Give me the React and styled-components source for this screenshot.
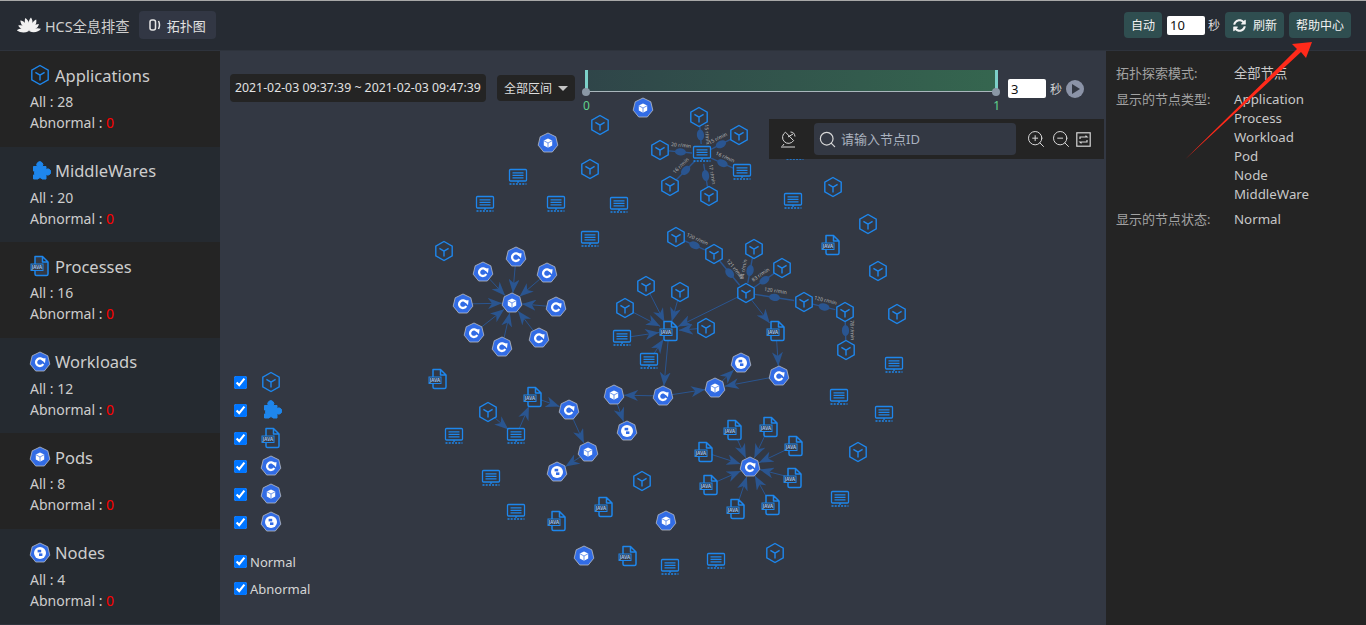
import React from 'react';
import styled, { createGlobalStyle } from 'styled-components';
import { FaSyncAlt } from 'react-icons/fa';
import { Search, ZoomIn, ZoomOut } from 'lucide-react';

const BLUE = '#1e86ec';
const K8S = '#326ce5';
const EDGE = '#2a5590';

const GlobalStyle = createGlobalStyle`
  html, body { margin: 0; padding: 0; height: 100%; overflow: hidden; background: #333843; }
  * { box-sizing: border-box; }
  body { font-family: 'Noto Sans', 'Noto Sans CJK SC', sans-serif; font-size: 13px; }
`;

const Page = styled.div`
  position: relative;
  display: flex;
  flex-direction: column;
  width: 1366px;
  height: 625px;
  overflow: hidden;
`;

const Header = styled.header`
  display: flex;
  align-items: center;
  justify-content: space-between;
  height: 51px;
  flex: none;
  padding: 0 15px 1px 17px;
  background: #262b33;
  border-top: 1px solid #a8a8a8;
  border-bottom: 1px solid #2e333c;
`;

const Brand = styled.div`
  display: flex;
  align-items: center;
  gap: 9px;
`;

const Title = styled.span`
  margin-left: -5px;
  font-size: 14.3px;
  color: #cfcfcf;
`;

const Tab = styled.div`
  display: flex;
  align-items: center;
  gap: 6px;
  height: 28px;
  padding: 0 10px;
  border-radius: 4px;
  background: #323744;
  color: #e2e2e2;
  font-size: 13px;
`;

const HeaderTools = styled.div`
  display: flex;
  align-items: center;
  gap: 5px;
  color: #e6e6e6;
`;

const ToolButton = styled.button`
  display: flex;
  align-items: center;
  gap: 7px;
  height: 26px;
  padding: 0 7px;
  border: 0;
  border-radius: 4px;
  background: #2f4e50;
  color: #f2f2f2;
  font: inherit;
  font-size: 12px;
`;

const RefreshIcon = styled(FaSyncAlt)`
  width: 13px;
  height: 13px;
  margin-left: 1px;
`;

const NumberBox = styled.input`
  width: 38px;
  height: 19px;
  padding: 0 3px;
  border: 0;
  border-radius: 2px;
  background: #fff;
  color: #111;
  font-family: inherit;
  font-size: 13px;
`;

const Unit = styled.span`
  margin-left: -2px;
  font-size: 12px;
  color: #dcdcdc;
`;

const Body = styled.div`
  display: flex;
  flex: 1;
  min-height: 0;
`;

const Sidebar = styled.aside`
  display: flex;
  flex-direction: column;
  width: 220px;
  flex: none;
  padding-bottom: 0.5px;
  background: #2e333c;
`;

const Summary = styled.section`
  flex: 1;
  padding: 12px 0 0 30px;
  background: ${(p) => (p.$alt ? '#252a30' : '#242424')};
  color: #cdcdcd;
  font-size: 14px;
  line-height: 21px;
`;

const SummaryTitle = styled.div`
  display: flex;
  align-items: center;
  gap: 4px;
  height: 24px;
  margin-bottom: 4px;
  margin-left: -1px;
  font-size: 16.5px;
`;

const Zero = styled.span`
  color: #f00;
`;

const Main = styled.main`
  position: relative;
  display: flex;
  flex-direction: column;
  flex: 1;
  min-width: 0;
  background: #333843;
`;

const Graph = styled.svg`
  position: absolute;
  left: 0;
  top: 0;
  width: 886px;
  height: 574px;
`;

const TimeRow = styled.div`
  position: relative;
  display: flex;
  align-items: flex-start;
  padding: 19px 0 0 10px;
`;

const DateChip = styled.div`
  width: 256px;
  height: 28px;
  margin-top: 4px;
  padding: 0 5px;
  border-radius: 4px;
  background: #242424;
  color: #e2e2e2;
  font-size: 12.3px;
  line-height: 28px;
  white-space: nowrap;
`;

const RangeSelect = styled.div`
  display: flex;
  align-items: center;
  justify-content: space-between;
  width: 78px;
  height: 26px;
  margin: 5px 0 0 11px;
  padding: 0 7px;
  border-radius: 4px;
  background: #242424;
  color: #dedede;
  font-size: 12px;
`;

const Caret = styled.i`
  width: 0;
  height: 0;
  border-left: 5px solid transparent;
  border-right: 5px solid transparent;
  border-top: 5px solid #c4c4c4;
`;

const Slider = styled.div`
  position: relative;
  width: 413px;
  height: 22px;
  margin-left: 10px;
  background: linear-gradient(90deg, #2f4549, #35664f);
  border-bottom: 1px solid #a9b6bc;
`;

const Handle = styled.i`
  position: absolute;
  top: 0;
  ${(p) => (p.$end ? 'right: 0' : 'left: 0')};
  width: 3px;
  height: 22px;
  background: #7dd0c9;
  &::after {
    content: '';
    position: absolute;
    left: -3px;
    bottom: -4px;
    width: 8px;
    height: 8px;
    border-radius: 50%;
    background: #8a97a5;
  }
`;

const Tick = styled.span`
  position: absolute;
  top: 28px;
  ${(p) => (p.$end ? 'right: -2px' : 'left: -2px')};
  color: #5fd38d;
  font-size: 12px;
  line-height: 16px;
`;

const PlayGroup = styled.div`
  display: flex;
  align-items: center;
  gap: 4px;
  height: 19px;
  margin: 9px 0 0 10px;
  color: #d4d4d4;
  font-size: 12px;
`;

const PlayButton = styled.span`
  display: flex;
  align-items: center;
  justify-content: center;
  width: 18px;
  height: 18px;
  border-radius: 50%;
  background: #8b93a7;
  &::before {
    content: '';
    margin-left: 2px;
    border-left: 8px solid #333843;
    border-top: 5px solid transparent;
    border-bottom: 5px solid transparent;
  }
`;

const GraphTools = styled.div`
  position: absolute;
  top: 68px;
  left: 549px;
  display: flex;
  align-items: center;
  width: 335px;
  height: 40px;
  padding: 0 12px 0 11px;
  background: #242424;
  color: #d8d8d8;
`;

const SearchBox = styled.label`
  display: flex;
  align-items: center;
  gap: 2px;
  width: 202px;
  height: 32px;
  margin: 0 10px 0 18px;
  padding: 0 4px;
  border-radius: 4px;
  background: #333843;
  color: #d8d8d8;
`;

const SearchInput = styled.input`
  flex: 1;
  min-width: 0;
  border: 0;
  outline: 0;
  background: none;
  color: #ddd;
  font-family: inherit;
  font-size: 13px;
  &::placeholder { color: #aab2bf; opacity: 1; }
`;

const ZoomGroup = styled.div`
  display: flex;
  align-items: center;
  gap: 5px;
`;

const Legend = styled.div`
  position: relative;
  display: flex;
  flex-direction: column;
  margin-top: auto;
  padding: 0 0 23px 14px;
`;

const LegendRow = styled.label`
  display: flex;
  align-items: center;
  gap: ${(p) => (p.$text ? '3px' : '13px')};
  height: ${(p) => (p.$text ? '27px' : '28px')};
  margin-top: ${(p) => (p.$first ? '12px' : '0')};
  color: #d6d6d6;
  font-size: 13px;
`;

const Check = styled.input.attrs({ type: 'checkbox', readOnly: true })`
  width: 13px;
  height: 13px;
  margin: 0;
`;

const InfoPanel = styled.aside`
  display: grid;
  grid-template-columns: 118px 1fr;
  align-content: start;
  row-gap: 6.5px;
  width: 260px;
  flex: none;
  padding: 13px 0 0 10px;
  background: #242424;
  font-size: 13px;
  line-height: 19px;
`;

const InfoLabel = styled.div`
  color: #a2a2a2;
`;

const InfoValue = styled.div`
  color: #c8c8c8;
  font-size: 13.3px;
`;

const Pointer = styled.svg`
  position: absolute;
  left: 0;
  top: 0;
  width: 1366px;
  height: 625px;
  pointer-events: none;
`;

const HEPT = '0,-10 7.8,-6.2 9.8,2.2 4.3,9 -4.3,9 -9.8,2.2 -7.8,-6.2';

// one picture per node type, drawn round 0,0
const Glyph = ({ type }) => {
  if (type === 'c') {
    return (
      <g fill="none" stroke={BLUE} strokeWidth="1.4">
        <polygon points="0,-9.5 8.2,-4.8 8.2,4.8 0,9.5 -8.2,4.8 -8.2,-4.8" />
        <path d="M-4.6,-2.6 L0,0.2 L4.6,-2.6 M0,0.2 L0,5.6" />
      </g>
    );
  }
  if (type === 'm') {
    return (
      <path
        d="M-6.5,-4.5 H-2.6 A3,3 0 1 1 2.2,-4.5 H6 V-1.4 A3,3 0 1 1 6,3.4 V8 H2 A2.2,2.2 0 0 0 -2,8 H-6.5 V4 A2.2,2.2 0 0 0 -6.5,0 Z"
        fill={BLUE}
        stroke={BLUE}
        strokeWidth="1"
        strokeLinejoin="round"
      />
    );
  }
  if (type === 's') {
    return (
      <g fill="none" stroke={BLUE} strokeWidth="1.3">
        <rect x="-8.5" y="-7.5" width="17" height="11.5" rx="1" />
        <path d="M-5.5,-4.2 H5.5 M-5.5,-1.7 H5.5 M-5.5,0.8 H5.5" />
        <path d="M0,4 V6" />
        <path d="M-8.5,7 H8.5" strokeDasharray="2 1.2" strokeWidth="1.7" />
      </g>
    );
  }
  if (type === 'p') {
    return (
      <g>
        <path
          d="M-5,-9.5 H2.5 L8,-4 V8 Q8,9.5 6.5,9.5 H-3.5 Q-5,9.5 -5,8 Z M2.5,-9.5 V-4 H8"
          fill="#333843"
          stroke={BLUE}
          strokeWidth="1.5"
          strokeLinejoin="round"
        />
        <rect x="-9" y="-2" width="12" height="6.5" fill="#333843" stroke={BLUE} strokeWidth="1" />
        <text x="-3" y="3" fontSize="4.6" fontWeight="700" textAnchor="middle" fill="#9cc4f2">JAVA</text>
      </g>
    );
  }
  return (
    <g>
      <polygon points={HEPT} fill={K8S} stroke="#b9bcc4" strokeWidth="0.8" />
      {type === 'w' && (
        <g>
          <path d="M3.2,-1.6 A3.8,3.8 0 1 0 3.2,2" fill="none" stroke="#fff" strokeWidth="2.3" />
          <polygon points="0.6,-3.4 5.6,-3.8 5,1.2" fill="#fff" />
        </g>
      )}
      {type === 'o' && <polygon points="0,-4.5 4.2,-2.4 4.2,2.6 0,4.8 -4.2,2.6 -4.2,-2.4" fill="#fff" />}
      {type === 'o' && <path d="M-4,-2.2 L0,0 L4,-2.2 M0,0 V4.8" fill="none" stroke={K8S} strokeWidth="0.7" />}
      {type === 'n' && (
        <g>
          <circle r="6" fill="#fff" />
          <rect x="-2.4" y="-3.2" width="3.6" height="2.6" fill={K8S} />
          <rect x="-1" y="0.4" width="3.4" height="2.6" fill={K8S} />
        </g>
      )}
    </g>
  );
};

const NodeIcon = ({ type, size = 22 }) => (
  <svg width={size} height={size} viewBox="-11 -11 22 22">
    <Glyph type={type} />
  </svg>
);

const nodes = {
  a1: ['o', 512, 303], a2: ['w', 516, 257], a3: ['w', 547, 273], a4: ['w', 556, 307],
  a5: ['w', 539, 338], a6: ['w', 502, 347], a7: ['w', 474, 333], a8: ['w', 463, 304], a9: ['w', 483, 272],
  t1: ['s', 702, 154], t2: ['c', 699, 117], t3: ['c', 739, 135], t4: ['s', 742, 172],
  t5: ['c', 709, 196], t6: ['c', 670, 186], t7: ['c', 660, 150],
  m1: ['c', 676, 237], m2: ['c', 714, 254], m3: ['c', 754, 249], m4: ['c', 782, 268], m5: ['c', 746, 293],
  m6: ['c', 804, 302], m7: ['c', 845, 312], m8: ['c', 846, 350], m9: ['c', 646, 286], m10: ['c', 680, 292],
  m11: ['c', 625, 308], m12: ['c', 706, 328], p1: ['p', 669, 331], p2: ['p', 776, 331],
  s1: ['s', 622, 338], s2: ['s', 649, 361], n1: ['n', 741, 363], w1: ['w', 779, 376], o1: ['o', 715, 388],
  w2: ['w', 663, 396], o2: ['o', 614, 395], n2: ['n', 627, 431],
  b1: ['c', 488, 412], b2: ['s', 516, 436], b3: ['p', 533, 397], b4: ['w', 569, 410], b5: ['o', 588, 452], b6: ['n', 557, 472],
  r0: ['w', 750, 467], r1: ['p', 733, 430], r2: ['p', 769, 427], r3: ['p', 794, 446], r4: ['p', 793, 478],
  r5: ['p', 771, 505], r6: ['p', 736, 509], r7: ['p', 709, 485], r8: ['p', 704, 452],
  f1: ['o', 643, 108], f2: ['c', 600, 125], f3: ['o', 548, 143], f4: ['c', 590, 169], f5: ['s', 518, 177],
  f6: ['s', 485, 204], f7: ['s', 556, 204], f8: ['s', 619, 205], f9: ['s', 590, 239], f10: ['s', 793, 201],
  f11: ['c', 833, 187], f12: ['c', 868, 224], f13: ['p', 831, 245], f14: ['c', 878, 271], f15: ['c', 897, 314],
  f16: ['c', 444, 251], f17: ['s', 894, 365], f18: ['s', 839, 397], f19: ['s', 884, 414], f20: ['c', 858, 452],
  f21: ['s', 840, 499], f22: ['c', 775, 553], f23: ['s', 716, 561], f24: ['s', 670, 567], f25: ['p', 628, 556],
  f26: ['o', 584, 556], f27: ['o', 666, 521], f28: ['p', 604, 507], f29: ['c', 642, 481], f30: ['s', 516, 512],
  f31: ['p', 557, 521], f32: ['s', 491, 478], f33: ['s', 454, 436], f34: ['p', 438, 379], f35: ['s', 795, 152],
};

const edges = [
  ['a2', 'a1'], ['a3', 'a1'], ['a4', 'a1'], ['a5', 'a1'], ['a6', 'a1'], ['a7', 'a1'], ['a8', 'a1'], ['a9', 'a1'],
  ['m9', 'p1'], ['m10', 'p1'], ['m11', 'p1'], ['m12', 'p1'], ['s1', 'p1'], ['s2', 'p1'], ['m5', 'p1'], ['m5', 'p2'],
  ['p1', 'w2'], ['p2', 'w1'], ['w1', 'o1'], ['w2', 'o1'], ['w2', 'o2'], ['o1', 'n1'], ['o2', 'n2'],
  ['b1', 'b2'], ['b2', 'b3'], ['b3', 'b4'], ['b4', 'b5'], ['b5', 'b6'],
  ['r1', 'r0'], ['r2', 'r0'], ['r3', 'r0'], ['r4', 'r0'], ['r5', 'r0'], ['r6', 'r0'], ['r7', 'r0'], ['r8', 'r0'],
];

const rated = [
  ['m1', 'm2', '120 r/min'], ['m2', 'm5', '121 r/min'], ['m3', 'm5', '84 r/min'], ['m4', 'm5', '83 r/min'],
  ['m5', 'm6', '120 r/min'], ['m6', 'm7', '120 r/min'], ['m7', 'm8', '78 r/min'],
  ['t2', 't1', '15 r/min'], ['t3', 't1', '15 r/min'], ['t4', 't1', '16 r/min'],
  ['t5', 't1', '17 r/min'], ['t6', 't1', '16 r/min'], ['t7', 't1', '20 r/min'],
];

const trim = (from, to, start, end) => {
  const dx = to[1] - from[1];
  const dy = to[2] - from[2];
  const len = Math.hypot(dx, dy);
  const ux = dx / len;
  const uy = dy / len;
  return {
    x1: from[1] + ux * start,
    y1: from[2] + uy * start,
    x2: to[1] - ux * end,
    y2: to[2] - uy * end,
    angle: (Math.atan2(dy, dx) * 180) / Math.PI,
  };
};

const upright = (angle) => (angle > 90 || angle < -90 ? angle + 180 : angle);

const Topology = () => (
  <Graph viewBox="220 51 886 574">
    <defs>
      <marker id="head" markerUnits="userSpaceOnUse" markerWidth="15" markerHeight="11" refX="14" refY="5.5" orient="auto">
        <path d="M0,0 L14,5.5 L0,11 L4,5.5 Z" fill={EDGE} />
      </marker>
    </defs>
    {edges.map(([a, b]) => {
      const { x1, y1, x2, y2 } = trim(nodes[a], nodes[b], 8, 10);
      return <line key={a + b} x1={x1} y1={y1} x2={x2} y2={y2} stroke={EDGE} strokeWidth="1" markerEnd="url(#head)" />;
    })}
    {rated.map(([a, b, text]) => {
      const { x1, y1, x2, y2, angle } = trim(nodes[a], nodes[b], 9, 10);
      const mx = (x1 + x2) / 2;
      const my = (y1 + y2) / 2;
      return (
        <g key={a + b}>
          <line x1={x1} y1={y1} x2={x2} y2={y2} stroke={EDGE} strokeWidth="1.4" />
          <ellipse cx={mx} cy={my} rx="5.5" ry="3.6" fill={EDGE} transform={`rotate(${angle} ${mx} ${my})`} />
          <text
            x={mx}
            y={my - 5}
            fontSize="5"
            fill="#b9b9b9"
            textAnchor="middle"
            transform={`rotate(${upright(angle)} ${mx} ${my})`}
          >
            {text}
          </text>
        </g>
      );
    })}
    {Object.entries(nodes).map(([id, [type, x, y]]) => (
      <g key={id} transform={`translate(${x} ${y})`}>
        <Glyph type={type} />
      </g>
    ))}
  </Graph>
);

const petals = [-82, -58, -35, -12, 12, 35, 58, 82];

const HuaweiLogo = () => (
  <svg width="24" height="19" viewBox="-13 -16.5 26 20.5">
    {petals.map((deg) => (
      <path
        key={deg}
        d="M0,-0.5 C-3,-5 -3.2,-11 -1,-15 C2.6,-12 3,-5 0,-0.5 Z"
        fill="#f2f2f2"
        transform={`rotate(${deg}) scale(${Math.abs(deg) > 50 ? 0.88 : 1})`}
      />
    ))}
  </svg>
);

const TabIcon = () => (
  <svg width="12" height="14" viewBox="0 0 12 14" fill="none" stroke="#e6e6e6" strokeWidth="1.5">
    <rect x="1" y="2" width="5.5" height="10" rx="2" />
    <path d="M9.5,3 Q11.5,7 9.5,11" />
  </svg>
);

const DishIcon = () => (
  <svg width="16" height="17" viewBox="0 0 16 17" fill="none" stroke="#d8d8d8" strokeWidth="1">
    <path d="M5.5,1.2 A6,6 0 1 0 13.6,9.6 Z" />
    <path d="M8,6 L13,3 M10.5,1 Q14.5,1 15,5.5" />
    <path d="M4,13 L2.5,15 M1,16 H15" />
  </svg>
);

const ResetIcon = () => (
  <svg width="15" height="15" viewBox="0 0 15 15" fill="none" stroke="#d8d8d8" strokeWidth="1.2">
    <rect x="0.8" y="0.8" width="13.4" height="13.4" />
    <path d="M4,7 V5 H11 L9.5,3.6 M11,8 V10 H4 L5.5,11.4" />
  </svg>
);

const summaries = [
  { name: 'Applications', all: 28, type: 'c' },
  { name: 'MiddleWares', all: 20, type: 'm' },
  { name: 'Processes', all: 16, type: 'p' },
  { name: 'Workloads', all: 12, type: 'w' },
  { name: 'Pods', all: 8, type: 'o' },
  { name: 'Nodes', all: 4, type: 'n' },
];

const legendTypes = ['c', 'm', 'p', 'w', 'o', 'n'];

const App = () => (
  <Page>
    <GlobalStyle />
    <Header>
      <Brand>
        <HuaweiLogo />
        <Title>HCS全息排查</Title>
        <Tab>
          <TabIcon />
          拓扑图
        </Tab>
      </Brand>
      <HeaderTools>
        <ToolButton>自动</ToolButton>
        <NumberBox defaultValue="10" />
        <Unit>秒</Unit>
        <ToolButton>
          <RefreshIcon />
          刷新
        </ToolButton>
        <ToolButton>帮助中心</ToolButton>
      </HeaderTools>
    </Header>
    <Body>
      <Sidebar>
        {summaries.map((item, i) => (
          <Summary key={item.name} $alt={i % 2 === 1}>
            <SummaryTitle>
              <NodeIcon type={item.type} />
              {item.name}
            </SummaryTitle>
            <div>All : {item.all}</div>
            <div>
              Abnormal : <Zero>0</Zero>
            </div>
          </Summary>
        ))}
      </Sidebar>
      <Main>
        <Topology />
        <TimeRow>
          <DateChip>2021-02-03 09:37:39 ~ 2021-02-03 09:47:39</DateChip>
          <RangeSelect>
            全部区间
            <Caret />
          </RangeSelect>
          <Slider>
            <Handle />
            <Handle $end />
            <Tick>0</Tick>
            <Tick $end>1</Tick>
          </Slider>
          <PlayGroup>
            <NumberBox defaultValue="3" />
            秒
            <PlayButton />
          </PlayGroup>
        </TimeRow>
        <GraphTools>
          <DishIcon />
          <SearchBox>
            <Search size={19} strokeWidth={1.5} />
            <SearchInput placeholder="请输入节点ID" />
          </SearchBox>
          <ZoomGroup>
            <ZoomIn size={20} strokeWidth={1.2} />
            <ZoomOut size={20} strokeWidth={1.2} />
            <ResetIcon />
          </ZoomGroup>
        </GraphTools>
        <Legend>
          {legendTypes.map((type) => (
            <LegendRow key={type}>
              <Check defaultChecked />
              <NodeIcon type={type} />
            </LegendRow>
          ))}
          <LegendRow $text $first>
            <Check defaultChecked />
            Normal
          </LegendRow>
          <LegendRow $text>
            <Check defaultChecked />
            Abnormal
          </LegendRow>
        </Legend>
      </Main>
      <InfoPanel>
        <InfoLabel>拓扑探索模式:</InfoLabel>
        <InfoValue>全部节点</InfoValue>
        <InfoLabel>显示的节点类型:</InfoLabel>
        <InfoValue>
          Application
          <br />
          Process
          <br />
          Workload
          <br />
          Pod
          <br />
          Node
          <br />
          MiddleWare
        </InfoValue>
        <InfoLabel>显示的节点状态:</InfoLabel>
        <InfoValue>Normal</InfoValue>
      </InfoPanel>
    </Body>
    <Pointer viewBox="0 0 1366 625">
      <polygon points="1185,159.5 1297,49 1292,44 1312,42 1306,58 1301,52" fill="#ff2a1a" />
    </Pointer>
  </Page>
);

export default App;
